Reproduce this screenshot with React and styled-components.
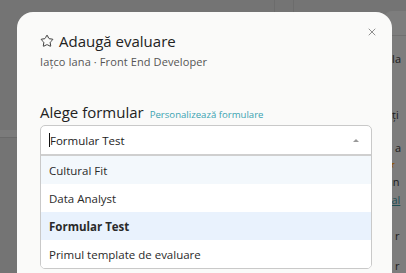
import React from "react";
import styled, { createGlobalStyle } from "styled-components";
import { Star, X } from "lucide-react";

const Global = createGlobalStyle`
  html, body { margin: 0; padding: 0; }
  body {
    background: #747474;
    font-family: "Open Sans", "Noto Sans", sans-serif;
    overflow: hidden;
    width: 406px;
    height: 273px;
  }
`;

const Page = styled.div`
  position: relative;
  width: 406px;
  height: 273px;
  display: flex;
  overflow: hidden;
`;

const MainArea = styled.div`
  flex: 1;
  display: flex;
  flex-direction: column;
`;

const TopStrip = styled.div`
  height: 12px;
  display: flex;
  justify-content: flex-end;
  padding-right: 90px;
  gap: 18px;
`;

const VLine = styled.div`
  width: 1px;
  background: #6c6c6c;
`;

const Band = styled.div`
  margin-top: 118px;
  height: 7px;
  background: #7b7b7b;
  border-bottom: 1px solid #6a6a6a;
`;

const SideCard = styled.div`
  width: 20px;
  margin-top: 11px;
  background: #7d7d7d;
  border-top-left-radius: 8px;
  display: flex;
  flex-direction: column;
  font-size: 11px;
  color: #222;
  padding-left: 2px;
`;

const SideHead = styled.div`
  height: 24px;
  border-bottom: 1px solid #707070;
`;

const SideText = styled.div`
  margin-top: ${(p) => p.$mt}px;
  line-height: 14px;
  white-space: nowrap;
  color: ${(p) => p.$color || "#1c1c1c"};
  text-decoration: ${(p) => (p.$u ? "underline" : "none")};
`;

const Modal = styled.div`
  position: absolute;
  left: 17px;
  top: 12px;
  width: 375px;
  height: 300px;
  background: #fafaf9;
  border-radius: 16px;
  box-sizing: border-box;
  padding: 19px 23px 0 23px;
`;

const CloseBtn = styled.button`
  position: absolute;
  top: 14px;
  right: 14px;
  border: 0;
  background: none;
  padding: 0;
  display: flex;
  color: #6b6b6b;
`;

const TitleRow = styled.div`
  display: flex;
  align-items: center;
  gap: 5px;
  color: #222;
  font-size: 15px;
  line-height: 20px;
`;

const Subtitle = styled.div`
  margin-top: 4px;
  font-size: 11px;
  color: #555;
  line-height: 14px;
  letter-spacing: 0.1px;
`;

const LabelRow = styled.div`
  margin-top: 33px;
  display: flex;
  align-items: baseline;
  gap: 6px;
`;

const Label = styled.div`
  font-size: 15px;
  color: #222;
`;

const LinkText = styled.a`
  font-size: 9.6px;
  color: #3aa3b2;
  text-decoration: none;
`;

const SelectWrap = styled.div`
  margin-top: 3px;
  width: 330px;
  border: 1px solid #c9c9c9;
  border-radius: 5px;
  background: #fff;
  overflow: hidden;
`;

const SelectControl = styled.div`
  height: 28px;
  display: flex;
  align-items: center;
  padding: 0 8px;
  border-bottom: 2px solid #cfcfcf;
  font-size: 11.5px;
  color: #222;
`;

const Caret = styled.span`
  display: inline-block;
  width: 1px;
  height: 14px;
  background: #111;
`;

const Arrow = styled.span`
  margin-left: auto;
  width: 0;
  height: 0;
  border-left: 3px solid transparent;
  border-right: 3px solid transparent;
  border-bottom: 3px solid #999;
  margin-right: 4px;
`;

const Option = styled.div`
  height: 28px;
  display: flex;
  align-items: center;
  padding: 0 8px;
  font-size: 11.5px;
  color: #2a2a2a;
  font-weight: ${(p) => (p.$selected ? 700 : 400)};
  background: ${(p) => (p.$selected ? "#e9f2fd" : p.$hover ? "#f3f8fc" : "#fff")};
`;

const options = [
  { label: "Cultural Fit", hover: true },
  { label: "Data Analyst" },
  { label: "Formular Test", selected: true },
  { label: "Primul template de evaluare" },
];

export default function App() {
  return (
    <>
      <Global />
      <Page>
        <MainArea>
          <TopStrip>
            <VLine />
            <VLine />
          </TopStrip>
          <Band />
        </MainArea>
        <SideCard>
          <SideHead />
          <SideText $mt={16}>ăla</SideText>
          <SideText $mt={42}>ăți</SideText>
          <SideText $mt={19}>a a</SideText>
          <SideText $mt={2} $color="#8a5a0e">★</SideText>
          <SideText $mt={4}>un</SideText>
          <SideText $mt={4} $color="#1f4f55" $u>val</SideText>
          <SideText $mt={22}>a r</SideText>
          <SideText $mt={16}>a r</SideText>
        </SideCard>
        <Modal>
          <CloseBtn>
            <X size={12} strokeWidth={1.5} />
          </CloseBtn>
          <TitleRow>
            <Star size={14} strokeWidth={1.5} />
            <span>Adaugă evaluare</span>
          </TitleRow>
          <Subtitle>Iațco Iana · Front End Developer</Subtitle>
          <LabelRow>
            <Label>Alege formular</Label>
            <LinkText>Personalizează formulare</LinkText>
          </LabelRow>
          <SelectWrap>
            <SelectControl>
              <Caret />
              Formular Test
              <Arrow />
            </SelectControl>
            {options.map((o) => (
              <Option key={o.label} $selected={o.selected} $hover={o.hover}>
                {o.label}
              </Option>
            ))}
          </SelectWrap>
        </Modal>
      </Page>
    </>
  );
}
